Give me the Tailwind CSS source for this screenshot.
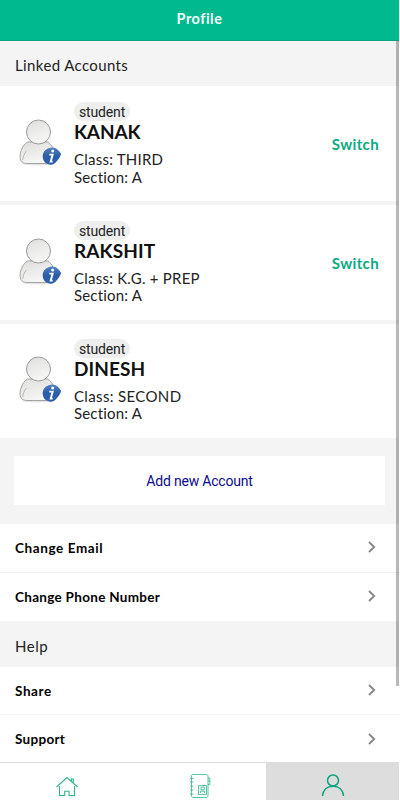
<!DOCTYPE html>
<html lang="en">
<head>
    <meta charset="UTF-8">
    <meta name="viewport" content="width=device-width, initial-scale=1.0">
    <script src="https://cdn.jsdelivr.net/npm/@tailwindcss/browser@4"></script>
    <title>Profile</title>
</head>
<body class="h-screen overflow-hidden bg-white font-['Lato',sans-serif] text-black">
    <!-- shared icons -->
    <svg class="absolute h-0 w-0">
        <defs>
            <linearGradient id="grey" x1="0" y1="0" x2="0.4" y2="1">
                <stop offset="0" stop-color="#dededc" />
                <stop offset="1" stop-color="#f6f6f5" />
            </linearGradient>
            <linearGradient id="blue" x1="0" y1="0" x2="0" y2="1">
                <stop offset="0" stop-color="#5583bd" />
                <stop offset="0.5" stop-color="#2a5caa" />
                <stop offset="1" stop-color="#2e60ab" />
            </linearGradient>
            <symbol id="avatar" viewBox="0 0 44 48">
                <ellipse cx="19" cy="45" rx="16" ry="1.5" fill="#e5e5e5" />
                <path d="M8.500 23C3 26.500.8 33.500 1.100 38.500 1.300 42.500 4 44.500 8 44.500h22c4 0 6.500-2 6.500-6 0-5.500-2.500-12.500-8-15.500Z" fill="url(#grey)" stroke="#a3a3a1" />
                <path d="M3.700 41c.3-3 1.500-6.500 3.800-9" fill="none" stroke="#a8a8a6" stroke-width=".8" />
                <circle cx="19.500" cy="13" r="12" fill="url(#grey)" stroke="#989896" />
                <path d="M33.500 28.500c4 0 6.500 3 8.700 6.500-1.300 3.500-3.500 6.800-6 8.900-2.500 2.100-5.800 2.300-8.600.7-2.700-1.500-3.900-4.400-3.900-7.300 0-5.300 4.300-8.800 9.800-8.800Z" fill="url(#blue)" />
                <circle cx="33.700" cy="32" r="1.500" fill="#fff" />
                <path d="M30.300 35.600h3.400l-2 7h2" fill="none" stroke="#fff" stroke-width="1.900" />
            </symbol>
            <symbol id="chevron" viewBox="0 0 8 12">
                <path d="M1 1l5.200 5L1 11" fill="none" stroke="#858585" stroke-width="1.800" />
            </symbol>
        </defs>
    </svg>

    <div class="relative flex h-full w-[399px] flex-col">
        <header class="flex h-[41px] shrink-0 justify-center border-b border-[#0aa37d] bg-[#00b98e] pt-[9px] text-[14.5px] leading-5 font-bold text-[#f2fffb]">
            <h1 class="tracking-[0.5px]">Profile</h1>
        </header>

        <main class="flex-1 overflow-hidden bg-[#f4f4f4]">
            <h2 class="h-[45px] pt-[14px] pl-[15px] text-[15px] leading-5 tracking-[0.38px] text-[#222]">Linked Accounts</h2>

            <section class="flex flex-col gap-[4px]">
                <div class="flex h-[115px] bg-white pl-[19px]">
                    <svg class="mt-[33px] h-[48px] w-[44px]"><use href="#avatar" /></svg>
                    <div class="ml-[11px] flex flex-1 flex-col items-start pt-4">
                        <span class="h-[19px] rounded-full bg-[#eeeeee] px-[5px] font-['Roboto',sans-serif] text-[14px] leading-5 tracking-[-0.15px] text-[#222]">student</span>
                        <h3 class="text-[19px] leading-[22px] font-bold tracking-[-0.15px] text-[#111]">KANAK</h3>
                        <p class="mt-[8px] text-[15px] leading-[17px] tracking-[0.23px] text-[#222]">Class: THIRD</p>
                        <p class="text-[15px] leading-[18px] tracking-[0.18px] text-[#222]">Section: A</p>
                    </div>
                    <button class="mr-5 h-[115px] pt-px text-[15px] font-bold tracking-[0.35px] text-[#0aaa82]">Switch</button>
                </div>
                <div class="flex h-[115px] bg-white pl-[19px]">
                    <svg class="mt-[33px] h-[48px] w-[44px]"><use href="#avatar" /></svg>
                    <div class="ml-[11px] flex flex-1 flex-col items-start pt-[15.5px]">
                        <span class="h-[19px] rounded-full bg-[#eeeeee] px-[5px] font-['Roboto',sans-serif] text-[14px] leading-5 tracking-[-0.15px] text-[#222]">student</span>
                        <h3 class="text-[19px] leading-[22px] font-bold tracking-[0.1px] text-[#111]">RAKSHIT</h3>
                        <p class="mt-[8px] text-[15px] leading-[17.5px] tracking-[0.23px] text-[#222]">Class: K.G. + PREP</p>
                        <p class="text-[15px] leading-[17.5px] tracking-[0.18px] text-[#222]">Section: A</p>
                    </div>
                    <button class="mr-5 h-[115px] pt-px text-[15px] font-bold tracking-[0.35px] text-[#0aaa82]">Switch</button>
                </div>
                <div class="flex h-[114px] bg-white pl-[19px]">
                    <svg class="mt-[32px] h-[48px] w-[44px]"><use href="#avatar" /></svg>
                    <div class="ml-[11px] flex flex-1 flex-col items-start pt-[15px]">
                        <span class="h-[19px] rounded-full bg-[#eeeeee] px-[5px] font-['Roboto',sans-serif] text-[14px] leading-5 tracking-[-0.15px] text-[#222]">student</span>
                        <h3 class="text-[19px] leading-[22px] font-bold tracking-[0.1px] text-[#111]">DINESH</h3>
                        <p class="mt-[7.5px] text-[15px] leading-[17.5px] tracking-[0.35px] text-[#222]">Class: SECOND</p>
                        <p class="text-[15px] leading-[17.5px] tracking-[0.18px] text-[#222]">Section: A</p>
                    </div>
                </div>
            </section>

            <div class="h-[86px] px-[14px] pt-[18px]">
                <button class="h-[49px] w-full bg-white pt-px font-['Roboto',sans-serif] text-[14px] tracking-[-0.2px] text-[#0b0b8f]">Add new Account</button>
            </div>

            <ul class="text-[13.5px] font-bold">
                <li class="flex h-[49px] items-center justify-between border-b border-[#eeeeee] bg-white pr-[23px] pl-[15px]">
                    <span class="tracking-[0.6px]">Change Email</span>
                    <svg class="mb-0.5 h-3 w-2"><use href="#chevron" /></svg>
                </li>
                <li class="flex h-[48px] items-center justify-between bg-white pr-[23px] pl-[15px]">
                    <span class="tracking-[0.3px]">Change Phone Number</span>
                    <svg class="mb-0.5 h-3 w-2"><use href="#chevron" /></svg>
                </li>
            </ul>

            <h2 class="h-[46px] pt-[15px] pl-[15px] text-[15px] leading-5 tracking-[0.5px] text-[#222]">Help</h2>

            <ul class="text-[13.5px] font-bold">
                <li class="flex h-[48px] items-center justify-between border-b border-[#f4f4f4] bg-white pt-px pr-[23px] pl-[15px]">
                    <span class="tracking-[0.6px]">Share</span>
                    <svg class="mb-0.5 h-3 w-2"><use href="#chevron" /></svg>
                </li>
                <li class="flex h-[48px] items-center justify-between bg-white pt-px pr-[23px] pl-[15px]">
                    <span class="tracking-[0.3px]">Support</span>
                    <svg class="mb-0.5 h-3 w-2"><use href="#chevron" /></svg>
                </li>
            </ul>
        </main>

        <!-- scrollbar thumb -->
        <div class="absolute top-[41px] right-0 h-[645px] w-[3.500px] bg-black/28"></div>

        <nav class="grid h-[38px] shrink-0 grid-cols-3 border-t border-[#dcdcdc] text-[#2fb592]">
            <a class="flex justify-center pt-[13px]">
                <svg class="h-[22px] w-6" viewBox="0 0 24 22" fill="none" stroke="currentColor" stroke-width="1.100">
                    <path d="M1.500 11 12 1.500 22.500 11M4.500 10v9.500h5.200v-4.300h4.400v4.300h5.400V10M16.500 5V3h1.800v4" />
                </svg>
            </a>
            <a class="flex justify-center pt-[10px]">
                <svg class="h-[26px] w-[22px]" viewBox="0 0 22 26" fill="none" stroke="currentColor" stroke-width=".8">
                    <path d="M4 1.500h13c1.500 0 2 .7 2 2v19c0 1.300-.5 2-2 2H4c-1 0-1.500-.5-1.500-1.500V3c0-1 .5-1.500 1.500-1.500Z" />
                    <path d="M1 5.500h3.500M1 9h3.500M1 13h3.500M1 17h3.500M1 21h3.500M19 5h1.800v6.500H19M19 8h1.800" />
                    <path d="M9.500 12.500h8v9h-8zM12 14h3.200v3H12zM11.500 20v-1.800h4V20" />
                </svg>
            </a>
            <a class="flex justify-center bg-[#dddddd] pt-[11px] text-[#08a47c]">
                <svg class="h-6 w-6" viewBox="0 0 24 24" fill="none" stroke="currentColor" stroke-width="1.500">
                    <circle cx="12" cy="6.500" r="5.500" />
                    <path d="M1.500 22C2 16 6 12.200 12 12.200s10 3.800 10.500 9.800" />
                </svg>
            </a>
        </nav>
    </div>
</body>
</html>
